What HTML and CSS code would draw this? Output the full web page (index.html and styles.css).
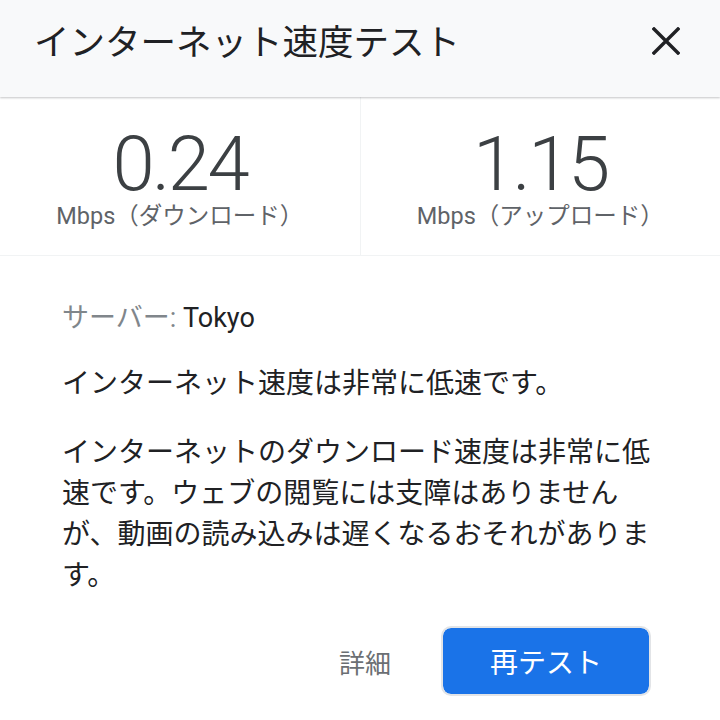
FILE: index.html
```html
<!DOCTYPE html>
<html lang="ja">
<head>
    <meta charset="UTF-8">
    <meta name="viewport" content="width=device-width, initial-scale=1.0">
    <title>インターネット速度テスト</title>
    <link rel="stylesheet" href="styles.css">
</head>
<body>
    <div class="header">
        <h1 class="title">インターネット速度テスト</h1>
        <button class="close" aria-label="閉じる">
            <svg width="28" height="28" viewBox="0 0 28 28">
                <path d="M2 2 L26 26 M26 2 L2 26" stroke="#202124" stroke-width="3.4" stroke-linecap="square" fill="none"/>
            </svg>
        </button>
    </div>

    <div class="stats">
        <div class="stat">
            <div class="stat-value">0.24</div>
            <div class="stat-label">Mbps（ダウンロード）</div>
        </div>
        <div class="stat">
            <div class="stat-value">1.15</div>
            <div class="stat-label">Mbps（アップロード）</div>
        </div>
    </div>

    <div class="content">
        <p class="server"><span class="server-label">サーバー:</span> Tokyo</p>
        <p class="summary">インターネット速度は非常に低速です。</p>
        <p class="detail">インターネットのダウンロード速度は非常に低速です。ウェブの閲覧には支障はありませんが、動画の読み込みは遅くなるおそれがあります。</p>
    </div>

    <div class="actions">
        <button class="link-btn">詳細</button>
        <button class="primary-btn">再テスト</button>
    </div>
</body>
</html>
```

FILE: styles.css
```css
body {
    margin: 0;
    font-family: Roboto, "Noto Sans CJK JP", sans-serif;
    color: #202124;
    background: #fff;
}
.header {
    height: 97px;
    background: #f8f9fa;
    display: flex;
    align-items: center;
    justify-content: space-between;
    padding: 0 40px 0 34px;
    box-shadow: 0 1px 2px rgba(60, 64, 67, 0.3);
    position: relative;
    box-sizing: border-box;
}
.title {
    margin: 0;
    font-size: 35.5px;
    font-weight: 400;
    padding-bottom: 18px;
}
.close {
    background: none;
    border: none;
    padding: 0;
    width: 28px;
    height: 28px;
    margin-bottom: 16px;
}
.close svg {
    display: block;
}
.stats {
    display: flex;
    border-bottom: 1px solid #f1f3f4;
    height: 159px;
    box-sizing: border-box;
}
.stat {
    flex: 1;
    text-align: center;
    padding-top: 29px;
}
.stat + .stat {
    border-left: 1px solid #f1f3f4;
}
.stat-value {
    font-size: 76px;
    font-weight: 300;
    color: #3c4043;
    line-height: 76px;
    letter-spacing: -2.5px;
}
.stat-label {
    font-size: 23.5px;
    color: #5f6368;
    line-height: 28px;
}
.content {
    padding: 42px 62px 0 62px;
    font-size: 28px;
    line-height: 41px;
}
.content p {
    margin: 0;
}
.server {
    font-size: 27px;
}
.server-label {
    color: #80868b;
}
.summary {
    margin-top: 24px !important;
}
.detail {
    margin-top: 28px !important;
}
.actions {
    display: flex;
    justify-content: flex-end;
    align-items: center;
    padding: 30px 69px 0 0;
    gap: 50px;
}
.link-btn {
    background: none;
    border: none;
    font-family: inherit;
    font-size: 26px;
    color: #6b6f73;
    padding: 0;
}
.primary-btn {
    width: 210px;
    height: 70px;
    border: 2px solid #e2e4e7;
    border-radius: 10px;
    background: #1a73e8;
    background-clip: padding-box;
    color: #fff;
    font-family: inherit;
    font-size: 28px;
}
```
